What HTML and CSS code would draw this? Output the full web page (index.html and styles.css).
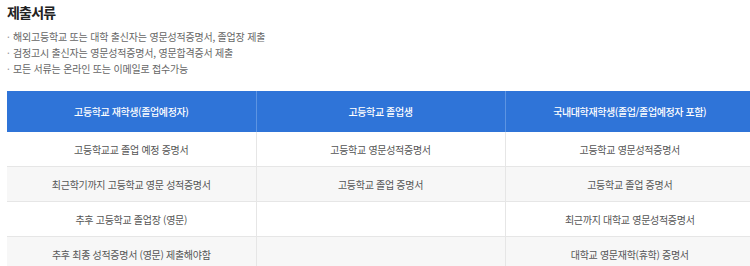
FILE: index.html
```html
<!DOCTYPE html>
<html lang="ko">
<head>
<meta charset="utf-8">
<link rel="stylesheet" href="styles.css">
</head>
<body>
<div class="page">
  <h2 class="title">제출서류</h2>
  <ul class="notes">
    <li>해외고등학교 또는 대학 출신자는 영문성적증명서, 졸업장 제출</li>
    <li>검정고시 출신자는 영문성적증명서, 영문합격증서 제출</li>
    <li>모든 서류는 온라인 또는 이메일로 접수가능</li>
  </ul>
  <table class="docs">
    <thead>
      <tr>
        <th>고등학교 재학생(졸업예정자)</th>
        <th>고등학교 졸업생</th>
        <th>국내대학재학생(졸업/졸업예정자 포함)</th>
      </tr>
    </thead>
    <tbody>
      <tr>
        <td>고등학교교 졸업 예정 증명서</td>
        <td>고등학교 영문성적증명서</td>
        <td>고등학교 영문성적증명서</td>
      </tr>
      <tr class="alt">
        <td>최근학기까지 고등학교 영문 성적증명서</td>
        <td>고등학교 졸업 증명서</td>
        <td>고등학교 졸업 증명서</td>
      </tr>
      <tr>
        <td>추후 고등학교 졸업장 (영문)</td>
        <td></td>
        <td>최근까지 대학교 영문성적증명서</td>
      </tr>
      <tr class="alt">
        <td>추후 최종 성적증명서 (영문) 제출해야함</td>
        <td></td>
        <td>대학교 영문재학(휴학) 증명서</td>
      </tr>
    </tbody>
  </table>
</div>
</body>
</html>
```

FILE: styles.css
```css
html, body {
  margin: 0;
  padding: 0;
  overflow: hidden;
  background: #ffffff;
}

body {
  font-family: "Noto Sans CJK KR", "Noto Sans", sans-serif;
  color: #555555;
}

.page {
  padding: 0 0 0 7px;
  width: 747px;
}

.title {
  margin: 0;
  padding-top: 3px;
  height: 22px;
  line-height: 18px;
  font-size: 14px;
  font-weight: 700;
  letter-spacing: -0.8px;
  color: #222222;
}

.notes {
  list-style: none;
  margin: 4px 0 0 0;
  padding: 0;
}

.notes li {
  height: 16px;
  line-height: 16px;
  font-size: 10px;
  letter-spacing: -0.2px;
  color: #666666;
  padding-left: 6px;
  position: relative;
}

.notes li::before {
  content: "·";
  position: absolute;
  left: 0;
  top: 0;
  color: #999999;
}

.docs {
  margin-top: 14px;
  width: 747px;
  border-collapse: collapse;
  table-layout: fixed;
}

.docs th {
  height: 41px;
  padding: 0;
  background: #2f74d8;
  color: #ffffff;
  font-size: 10px;
  font-weight: 500;
  letter-spacing: -0.4px;
  text-align: center;
  border-left: 1px solid #5d94e2;
}

.docs th:first-child,
.docs td:first-child {
  border-left: none;
}

.docs td {
  height: 34px;
  padding: 0;
  font-size: 10px;
  letter-spacing: -0.3px;
  color: #555555;
  text-align: center;
  border-left: 1px solid #e6e6e6;
  border-bottom: 1px solid #e6e6e6;
}

.docs tr.alt td {
  background: #f7f7f7;
}
```
